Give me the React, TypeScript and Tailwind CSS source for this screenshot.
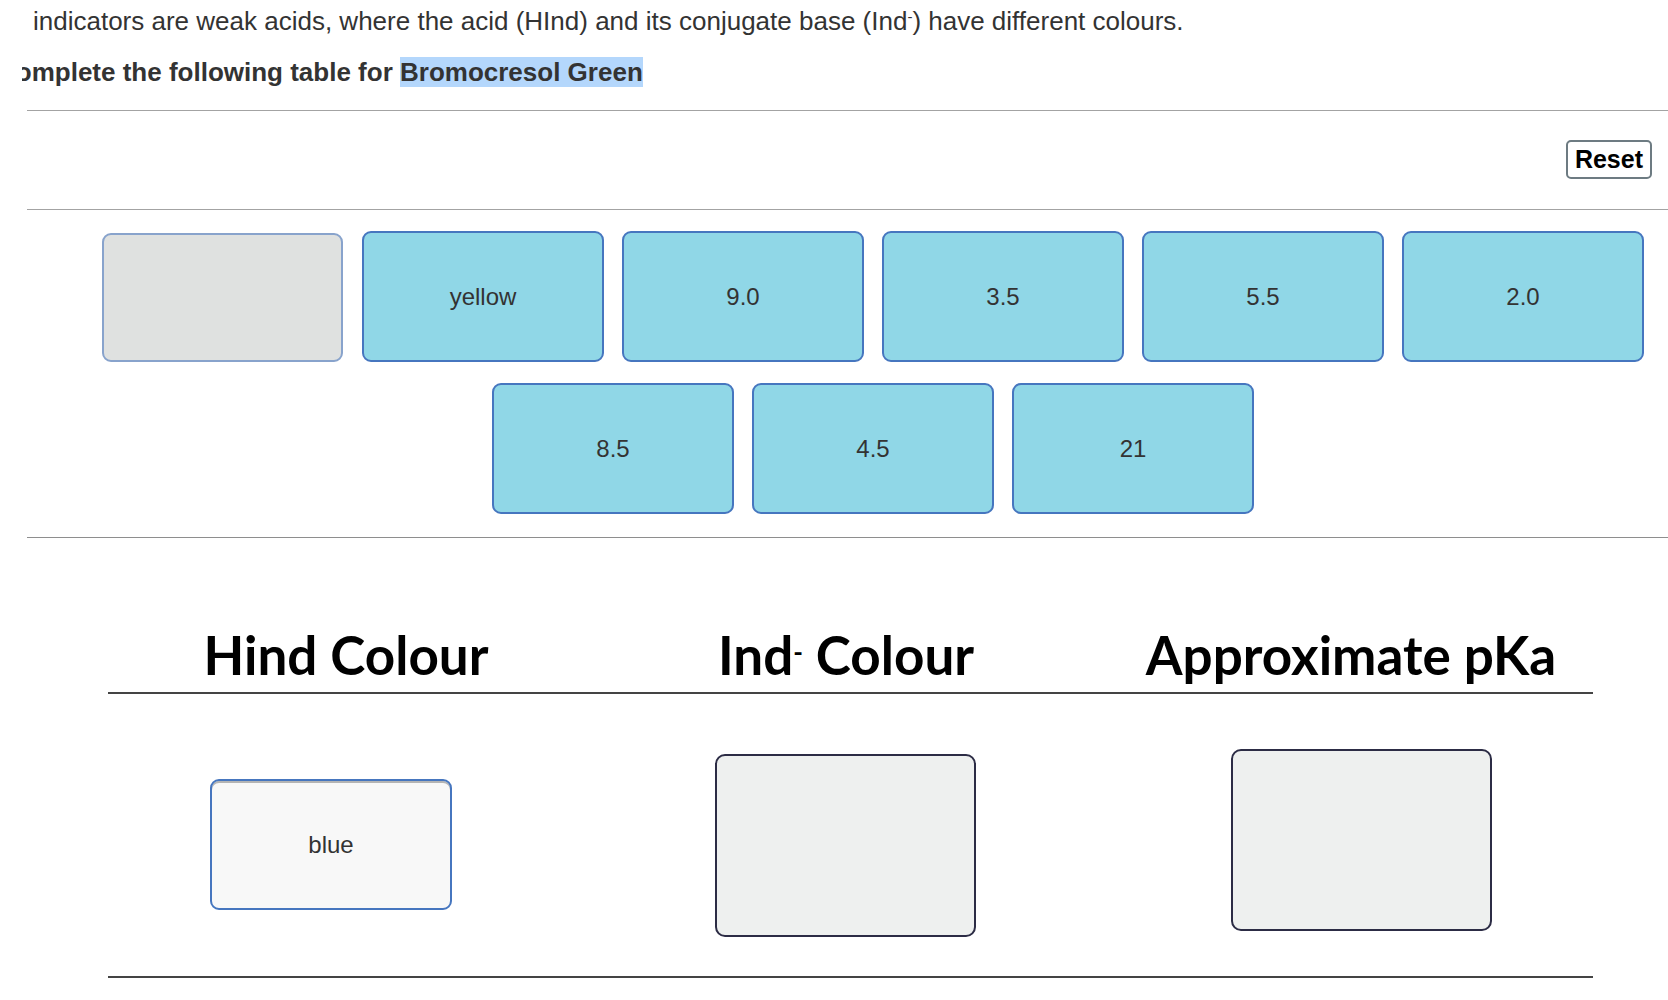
const tilesTop = ["yellow", "9.0", "3.5", "5.5", "2.0"];
const tilesBottom = ["8.5", "4.5", "21"];

const Tile = ({ label }: { label: string }) => (
  <div className="w-[242px] h-[131px] flex items-center justify-center rounded-[9px] border-2 border-[#4676bf] bg-[#90d7e7] text-[24px] text-[#333]">
    {label}
  </div>
);

export default function App() {
  return (
    <div className="w-[1668px] h-[1000px] overflow-hidden bg-white font-['Liberation_Sans',Arial,sans-serif] text-[#333]">
      <div className="ml-[22px] overflow-hidden">
        <div className="h-[42px] pl-[11px] flex items-center text-[26px] whitespace-nowrap">
          <span>
            indicators are weak acids, where the acid (HInd) and its conjugate base (Ind
            <sup className="text-[15px]">-</sup>) have different colours.
          </span>
        </div>
        <div className="mt-[16px] -ml-[25px] h-[29px] leading-[29px] text-[26px] font-bold whitespace-nowrap">
          Complete the following table for{" "}
          <span className="bg-[#b4d7fc]">Bromocresol Green</span>
        </div>
        <div className="mt-[23px] ml-[5px] h-px bg-[#a3a3a3]" />

        <div className="flex justify-end pr-[16px] pt-[29px] pb-[30px]">
          <button className="h-[39px] px-[7px] rounded-[5px] border-2 border-[#6d7b82] bg-white text-[25px] leading-none font-bold text-black">
            Reset
          </button>
        </div>
        <div className="ml-[5px] h-px bg-[#a3a3a3]" />

        <div className="ml-[80px] w-[1542px] pt-[21px] pb-[23px] flex flex-wrap justify-center gap-x-[18px] gap-y-[21px]">
          <div className="w-[242px] h-[131px] flex items-end">
            <div className="w-[241px] h-[129px] rounded-[9px] border-2 border-[#88a3cc] bg-[#dfe1e0]" />
          </div>
          {tilesTop.map((t) => (
            <Tile key={t} label={t} />
          ))}
          {tilesBottom.map((t) => (
            <Tile key={t} label={t} />
          ))}
        </div>
        <div className="ml-[5px] h-px bg-[#8e8e8e]" />

        <div className="ml-[86px] w-[1485px]">
          <div className="grid grid-cols-3 h-[156px] items-end border-b-2 border-[#444] pb-[11px] font-['Lato',sans-serif] font-bold text-[53px] leading-none text-black">
            <div className="text-center pr-[19px]">Hind Colour</div>
            <div className="text-center pr-[9px]">
              Ind<sup className="text-[26px]">-</sup> Colour
            </div>
            <div className="text-center pl-[11px]">Approximate pKa</div>
          </div>
          <div className="grid grid-cols-3 h-[284px] items-start border-b-2 border-[#444]">
            <div className="pt-[85px] pl-[102px]">
              <div className="w-[242px] h-[131px] flex items-center justify-center rounded-[9px] border-2 border-[#4676bf] bg-[#f8f8f8] shadow-[inset_0_2px_0_#b4b4b4] text-[24px] text-[#333]">
                blue
              </div>
            </div>
            <div className="pt-[60px] pl-[112px]">
              <div className="w-[261px] h-[183px] rounded-[10px] border-2 border-[#2c2c45] bg-[#eef0ef]" />
            </div>
            <div className="pt-[55px] pl-[133px]">
              <div className="w-[261px] h-[182px] rounded-[10px] border-2 border-[#2c2c45] bg-[#eef0ef]" />
            </div>
          </div>
        </div>
      </div>
    </div>
  );
}
